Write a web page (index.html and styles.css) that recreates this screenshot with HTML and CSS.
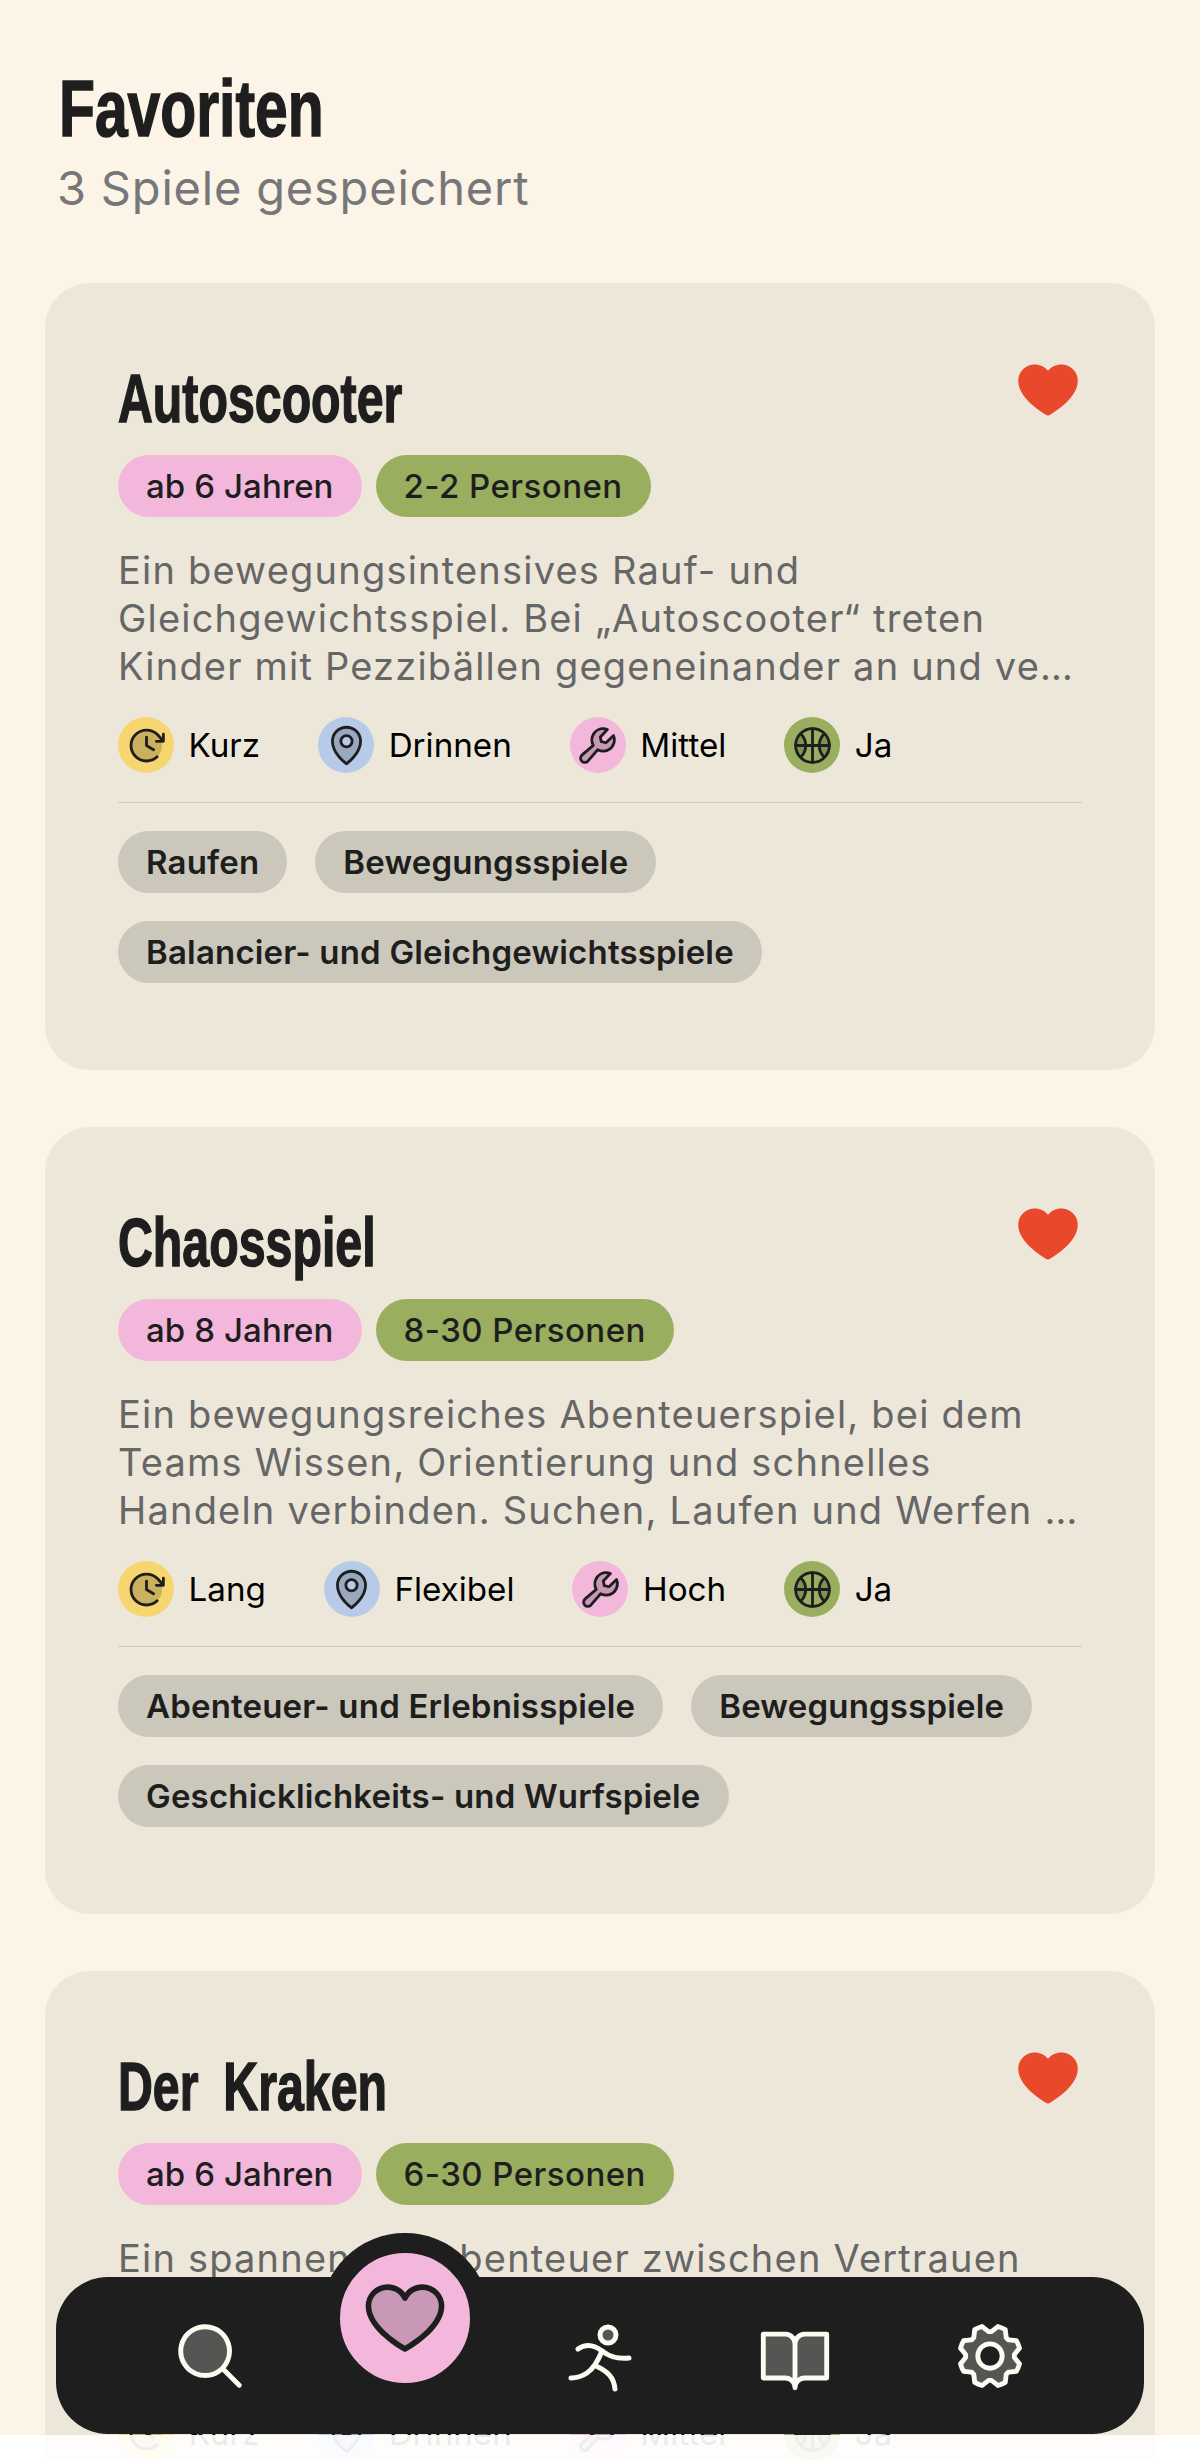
FILE: index.html
```html
<!DOCTYPE html>
<html lang="de">
<head>
<meta charset="utf-8">
<title>Favoriten</title>
<link rel="stylesheet" href="styles.css">
</head>
<body>
<svg class="sprite" xmlns="http://www.w3.org/2000/svg">
  <symbol id="i-heart-fill" viewBox="0 0 256 256"><path d="M240,94c0,70-103.79,126.66-108.21,129a8,8,0,0,1-7.58,0C119.79,220.66,16,164,16,94A62.07,62.07,0,0,1,78,32c20.65,0,38.73,8.88,50,23.89C139.27,40.88,157.35,32,178,32A62.07,62.07,0,0,1,240,94Z"/></symbol>
  <symbol id="i-clock" viewBox="0 0 256 256"><path opacity=".2" d="M216,128a88,88,0,1,1-88-88A88,88,0,0,1,216,128Z"/><path d="M136,80v43.47l36.12,21.67a8,8,0,0,1-8.24,13.72l-40-24A8,8,0,0,1,120,128V80a8,8,0,0,1,16,0Zm88-24a8,8,0,0,0-8,8V82c-6.35-7.36-12.83-14.45-20.12-21.83a96,96,0,1,0-2,137.7,8,8,0,0,0-11-11.64A80,80,0,1,1,184.54,71.4C192.68,79.64,199.81,87.58,207,96H184a8,8,0,0,0,0,16h40a8,8,0,0,0,8-8V64A8,8,0,0,0,224,56Z"/></symbol>
  <symbol id="i-pin" viewBox="0 0 256 256"><path opacity=".2" d="M128,24a80,80,0,0,0-80,80c0,72,80,128,80,128s80-56,80-128A80,80,0,0,0,128,24Zm0,112a32,32,0,1,1,32-32A32,32,0,0,1,128,136Z"/><path d="M128,64a40,40,0,1,0,40,40A40,40,0,0,0,128,64Zm0,64a24,24,0,1,1,24-24A24,24,0,0,1,128,128Zm0-112a88.1,88.1,0,0,0-88,88c0,31.4,14.51,64.68,42,96.25a254.19,254.19,0,0,0,41.45,38.3,8,8,0,0,0,9.18,0A254.19,254.19,0,0,0,174,200.25c27.45-31.57,42-64.85,42-96.25A88.1,88.1,0,0,0,128,16Zm0,206c-16.53-13-72-60.75-72-118a72,72,0,0,1,144,0C200,161.23,144.53,209,128,222Z"/></symbol>
  <symbol id="i-wrench" viewBox="0 0 256 256"><path opacity=".2" d="M224,96a64,64,0,0,1-94.94,56L73,217A24,24,0,0,1,39,183L104,126.94a64,64,0,0,1,80-90.29L144,80l5.66,26.34L176,112l43.35-40A63.8,63.8,0,0,1,224,96Z"/><path d="M226.76,69a8,8,0,0,0-12.84-2.88l-40.3,37.19-17.23-3.7-3.7-17.23,37.19-40.3A8,8,0,0,0,187,29.24,72,72,0,0,0,88,96,72.34,72.34,0,0,0,94,124.94L33.79,177c-.15.12-.29.26-.43.39a32,32,0,0,0,45.26,45.26c.13-.13.27-.28.39-.42L131.06,162A72,72,0,0,0,232,96,71.56,71.56,0,0,0,226.76,69ZM160,152a56.14,56.14,0,0,1-27.07-7,8,8,0,0,0-9.92,1.77L67.11,211.51a16,16,0,0,1-22.62-22.62L109.18,133a8,8,0,0,0,1.77-9.93,56,56,0,0,1,58.36-82.31l-31.2,33.81a8,8,0,0,0-1.94,7.1L141.83,108a8,8,0,0,0,6.14,6.14l26.35,5.66a8,8,0,0,0,7.1-1.94l33.81-31.2A56.06,56.06,0,0,1,160,152Z"/></symbol>
  <symbol id="i-ball" viewBox="0 0 256 256"><path opacity=".2" d="M62,62A93,93,0,0,1,62,194,93,93,0,0,1,62,62Zm132,0a93,93,0,0,1,0,132,93,93,0,0,1,0-132Z"/><g fill="none" stroke="currentColor" stroke-width="16" stroke-linecap="round"><circle cx="128" cy="128" r="96"/><path d="M128,32V224M32,128H224M62,62A93,93,0,0,1,62,194M194,62A93,93,0,0,0,194,194"/></g></symbol>
  <symbol id="i-search" viewBox="0 0 256 256"><path opacity=".25" d="M192,112a80,80,0,1,1-80-80A80,80,0,0,1,192,112Z"/><path d="M229.66,218.34l-50.07-50.06a88.11,88.11,0,1,0-11.31,11.31l50.06,50.07a8,8,0,0,0,11.32-11.32ZM40,112a72,72,0,1,1,72,72A72.08,72.08,0,0,1,40,112Z"/></symbol>
  <symbol id="i-heart-duo" viewBox="0 0 256 256"><path opacity=".2" d="M232,94c0,66-104,122-104,122S24,160,24,94A54,54,0,0,1,78,40c22.59,0,41.94,12.31,50,32,8.06-19.69,27.41-32,50-32A54,54,0,0,1,232,94Z"/><path d="M178,32c-20.65,0-38.73,8.88-50,23.89C116.73,40.88,98.65,32,78,32A62.07,62.07,0,0,0,16,94c0,70,103.79,126.66,108.21,129a8,8,0,0,0,7.58,0C136.21,220.66,240,164,240,94A62.07,62.07,0,0,0,178,32ZM128,206.8C109.74,196.16,32,147.69,32,94A46.06,46.06,0,0,1,78,48c19.45,0,35.78,10.36,42.6,27a8,8,0,0,0,14.8,0c6.82-16.67,23.15-27,42.6-27a46.06,46.06,0,0,1,46,46C224,147.61,146.24,196.15,128,206.8Z"/></symbol>
  <symbol id="i-run" viewBox="0 0 78 78"><circle cx="47" cy="18" r="8" fill="currentColor" fill-opacity=".25" stroke="currentColor" stroke-width="5"/><g fill="none" stroke="currentColor" stroke-width="5" stroke-linecap="round" stroke-linejoin="round"><path d="M17 32C24 27 32 27 41 34C50 41 58 42 68 41"/><path d="M41 34C37 44 32 52 26 56C20 60 16 61 10 61"/><path d="M35 49C46 54 53 60 54 72"/></g></symbol>
  <symbol id="i-book" viewBox="0 0 256 256"><path opacity=".25" d="M232,56V200H160a32,32,0,0,0-32,32,32,32,0,0,0-32-32H24V56H96a32,32,0,0,1,32,32,32,32,0,0,1,32-32Z"/><path d="M232,48H160a40,40,0,0,0-32,16A40,40,0,0,0,96,48H24a8,8,0,0,0-8,8V200a8,8,0,0,0,8,8H96a24,24,0,0,1,24,24,8,8,0,0,0,16,0,24,24,0,0,1,24-24h72a8,8,0,0,0,8-8V56A8,8,0,0,0,232,48ZM96,192H32V64H96a24,24,0,0,1,24,24V200A39.81,39.81,0,0,0,96,192Zm128,0H160a39.81,39.81,0,0,0-24,8V88a24,24,0,0,1,24-24h64Z"/></symbol>
  <symbol id="i-gear" viewBox="0 0 256 256"><path opacity=".25" fill-rule="evenodd" d="M199.9,123.66a73.93,73.93,0,0,1,0,8.68,8,8,0,0,0,1.74,5.48l14.19,17.73a91.57,91.57,0,0,1-6.23,15L187,173.11a8,8,0,0,0-5.1,2.64,74.11,74.11,0,0,1-6.14,6.14,8,8,0,0,0-2.64,5.1l-2.51,22.58a91.32,91.32,0,0,1-15,6.23l-17.74-14.19a8,8,0,0,0-5-1.75h-.48a73.93,73.93,0,0,1-8.68,0,8,8,0,0,0-5.48,1.74L100.45,215.8a91.57,91.57,0,0,1-15-6.23L82.89,187a8,8,0,0,0-2.64-5.1,74.11,74.11,0,0,1-6.14-6.14,8,8,0,0,0-5.1-2.64L46.43,170.6a91.32,91.32,0,0,1-6.23-15l14.19-17.74a8,8,0,0,0,1.74-5.48,73.93,73.93,0,0,1,0-8.68,8,8,0,0,0-1.74-5.48L40.2,100.45a91.57,91.57,0,0,1,6.23-15L69,82.89a8,8,0,0,0,5.1-2.64,74.11,74.11,0,0,1,6.14-6.14A8,8,0,0,0,82.89,69L85.4,46.43a91.32,91.32,0,0,1,15-6.23l17.74,14.19a8,8,0,0,0,5.48,1.74,73.93,73.93,0,0,1,8.68,0,8,8,0,0,0,5.48-1.74L155.55,40.2a91.57,91.57,0,0,1,15,6.23L173.11,69a8,8,0,0,0,2.64,5.1,74.11,74.11,0,0,1,6.14,6.14,8,8,0,0,0,5.1,2.64l22.58,2.51a91.32,91.32,0,0,1,6.23,15l-14.19,17.74A8,8,0,0,0,199.9,123.66ZM128,88a40,40,0,1,0,40,40A40,40,0,0,0,128,88Z"/><path d="M128,80a48,48,0,1,0,48,48A48.05,48.05,0,0,0,128,80Zm0,80a32,32,0,1,1,32-32A32,32,0,0,1,128,160Zm88-29.84q.06-2.16,0-4.32l14.92-18.64a8,8,0,0,0,1.48-7.06,107.21,107.21,0,0,0-10.88-26.25,8,8,0,0,0-6-3.93l-23.72-2.64q-1.48-1.56-3-3L186,40.54a8,8,0,0,0-3.94-6,107.71,107.71,0,0,0-26.25-10.87,8,8,0,0,0-7.06,1.49L130.16,40Q128,40,125.84,40L107.2,25.11a8,8,0,0,0-7.06-1.48A107.6,107.6,0,0,0,73.89,34.51a8,8,0,0,0-3.93,6L67.32,64.27q-1.56,1.49-3,3L40.54,70a8,8,0,0,0-6,3.94,107.71,107.71,0,0,0-10.87,26.25,8,8,0,0,0,1.49,7.06L40,125.84Q40,128,40,130.16L25.11,148.8a8,8,0,0,0-1.48,7.06,107.21,107.21,0,0,0,10.88,26.25,8,8,0,0,0,6,3.93l23.72,2.64q1.49,1.56,3,3L70,215.46a8,8,0,0,0,3.94,6,107.71,107.71,0,0,0,26.25,10.87,8,8,0,0,0,7.06-1.49L125.84,216q2.16.06,4.32,0l18.64,14.92a8,8,0,0,0,7.06,1.48,107.21,107.21,0,0,0,26.25-10.88,8,8,0,0,0,3.93-6l2.64-23.72q1.56-1.48,3-3L215.46,186a8,8,0,0,0,6-3.94,107.71,107.71,0,0,0,10.87-26.25,8,8,0,0,0-1.49-7.06Zm-16.1-6.5a73.93,73.93,0,0,1,0,8.68,8,8,0,0,0,1.74,5.48l14.19,17.73a91.57,91.57,0,0,1-6.23,15L187,173.11a8,8,0,0,0-5.1,2.64,74.11,74.11,0,0,1-6.14,6.14,8,8,0,0,0-2.64,5.1l-2.51,22.58a91.32,91.32,0,0,1-15,6.23l-17.74-14.19a8,8,0,0,0-5-1.75h-.48a73.93,73.93,0,0,1-8.68,0,8,8,0,0,0-5.48,1.74L100.45,215.8a91.57,91.57,0,0,1-15-6.23L82.89,187a8,8,0,0,0-2.64-5.1,74.11,74.11,0,0,1-6.14-6.14,8,8,0,0,0-5.1-2.64L46.43,170.6a91.32,91.32,0,0,1-6.23-15l14.19-17.74a8,8,0,0,0,1.74-5.48,73.93,73.93,0,0,1,0-8.68,8,8,0,0,0-1.74-5.48L40.2,100.45a91.57,91.57,0,0,1,6.23-15L69,82.89a8,8,0,0,0,5.1-2.64,74.11,74.11,0,0,1,6.14-6.14A8,8,0,0,0,82.89,69L85.4,46.43a91.32,91.32,0,0,1,15-6.23l17.74,14.19a8,8,0,0,0,5.48,1.74,73.93,73.93,0,0,1,8.68,0,8,8,0,0,0,5.48-1.74L155.55,40.2a91.57,91.57,0,0,1,15,6.23L173.11,69a8,8,0,0,0,2.64,5.1,74.11,74.11,0,0,1,6.14,6.14,8,8,0,0,0,5.1,2.64l22.58,2.51a91.32,91.32,0,0,1,6.23,15l-14.19,17.74A8,8,0,0,0,199.87,123.66Z"/></symbol>
</svg>

<div class="page">
  <header class="head">
    <h1 class="head-title">Favoriten</h1>
    <p class="head-sub">3 Spiele gespeichert</p>
  </header>

  <main class="list">
    <article class="card">
      <div class="card-top">
        <h2 class="card-title">Autoscooter</h2>
        <svg class="fav"><use href="#i-heart-fill"/></svg>
      </div>
      <div class="badges">
        <span class="badge badge-age">ab 6 Jahren</span>
        <span class="badge badge-people">2-2 Personen</span>
      </div>
      <p class="desc">Ein bewegungsintensives Rauf- und Gleichgewichtsspiel. Bei „Autoscooter“ treten Kinder mit Pezzibällen gegeneinander an und ve…</p>
      <ul class="facts">
        <li class="fact"><span class="dot dot-yellow"><svg class="dot-icon"><use href="#i-clock"/></svg></span><span class="fact-label">Kurz</span></li>
        <li class="fact"><span class="dot dot-blue"><svg class="dot-icon"><use href="#i-pin"/></svg></span><span class="fact-label">Drinnen</span></li>
        <li class="fact"><span class="dot dot-pink"><svg class="dot-icon"><use href="#i-wrench"/></svg></span><span class="fact-label">Mittel</span></li>
        <li class="fact"><span class="dot dot-green"><svg class="dot-icon"><use href="#i-ball"/></svg></span><span class="fact-label">Ja</span></li>
      </ul>
      <div class="tags">
        <span class="tag">Raufen</span>
        <span class="tag">Bewegungsspiele</span>
        <span class="tag">Balancier- und Gleichgewichtsspiele</span>
      </div>
    </article>

    <article class="card">
      <div class="card-top">
        <h2 class="card-title">Chaosspiel</h2>
        <svg class="fav"><use href="#i-heart-fill"/></svg>
      </div>
      <div class="badges">
        <span class="badge badge-age">ab 8 Jahren</span>
        <span class="badge badge-people">8-30 Personen</span>
      </div>
      <p class="desc">Ein bewegungsreiches Abenteuerspiel, bei dem Teams Wissen, Orientierung und schnelles Handeln verbinden. Suchen, Laufen und Werfen …</p>
      <ul class="facts">
        <li class="fact"><span class="dot dot-yellow"><svg class="dot-icon"><use href="#i-clock"/></svg></span><span class="fact-label">Lang</span></li>
        <li class="fact"><span class="dot dot-blue"><svg class="dot-icon"><use href="#i-pin"/></svg></span><span class="fact-label">Flexibel</span></li>
        <li class="fact"><span class="dot dot-pink"><svg class="dot-icon"><use href="#i-wrench"/></svg></span><span class="fact-label">Hoch</span></li>
        <li class="fact"><span class="dot dot-green"><svg class="dot-icon"><use href="#i-ball"/></svg></span><span class="fact-label">Ja</span></li>
      </ul>
      <div class="tags">
        <span class="tag">Abenteuer- und Erlebnisspiele</span>
        <span class="tag">Bewegungsspiele</span>
        <span class="tag">Geschicklichkeits- und Wurfspiele</span>
      </div>
    </article>

    <article class="card">
      <div class="card-top">
        <h2 class="card-title">Der Kraken</h2>
        <svg class="fav"><use href="#i-heart-fill"/></svg>
      </div>
      <div class="badges">
        <span class="badge badge-age">ab 6 Jahren</span>
        <span class="badge badge-people">6-30 Personen</span>
      </div>
      <p class="desc">Ein spannendes Abenteuer zwischen Vertrauen und Mut, bei dem ein Kind den Kraken spielt und die anderen versuchen, unbemerkt …</p>
      <ul class="facts">
        <li class="fact"><span class="dot dot-yellow"><svg class="dot-icon"><use href="#i-clock"/></svg></span><span class="fact-label">Kurz</span></li>
        <li class="fact"><span class="dot dot-blue"><svg class="dot-icon"><use href="#i-pin"/></svg></span><span class="fact-label">Drinnen</span></li>
        <li class="fact"><span class="dot dot-pink"><svg class="dot-icon"><use href="#i-wrench"/></svg></span><span class="fact-label">Mittel</span></li>
        <li class="fact"><span class="dot dot-green"><svg class="dot-icon"><use href="#i-ball"/></svg></span><span class="fact-label">Ja</span></li>
      </ul>
    </article>
  </main>

  <div class="veil"></div>

  <nav class="nav">
    <a class="nav-item"><svg class="nav-icon"><use href="#i-search"/></svg></a>
    <a class="nav-item"><span class="nav-active"><svg class="nav-active-icon"><use href="#i-heart-duo"/></svg></span></a>
    <a class="nav-item"><svg class="nav-icon"><use href="#i-run"/></svg></a>
    <a class="nav-item"><svg class="nav-icon"><use href="#i-book"/></svg></a>
    <a class="nav-item"><svg class="nav-icon"><use href="#i-gear"/></svg></a>
  </nav>
</div>
</body>
</html>
```

FILE: styles.css
```css
* { box-sizing: border-box; }

html, body { margin: 0; padding: 0; }

body {
  background: #fbf4e7;
  color: #1e1e1e;
  font-family: Inter, "Noto Sans", sans-serif;
}

.sprite { display: none; }

.page {
  position: relative;
  height: 2460px;
  overflow: hidden;
  background: #fbf4e7;
}

.head { padding: 69px 0 0 57px; height: 283px; }

.head-title,
.card-title {
  margin: 0;
  font-family: "Liberation Sans Narrow", "Liberation Sans", sans-serif;
  font-weight: 700;
  color: #1e1e1e;
  transform-origin: left center;
  -webkit-text-stroke: 1.5px #1e1e1e;
}

.head-title {
  font-size: 80px;
  line-height: 80px;
  margin-left: 2px;
  transform: scaleX(.735);
}

.head-sub {
  margin: 11px 0 0;
  font-size: 47px;
  line-height: 56px;
  letter-spacing: .8px;
  color: #77777a;
}

.list {
  display: flex;
  flex-direction: column;
  gap: 57px;
  padding: 0 45px;
}

.card {
  height: 787px;
  padding: 73px 73px 0;
  border-radius: 45px;
  background: #ede7da;
}

.card-top {
  display: flex;
  justify-content: space-between;
  align-items: flex-start;
  height: 99px;
}

.card-title {
  font-size: 68px;
  line-height: 78px;
  margin-top: 3px;
  word-spacing: 16px;
  transform: scaleX(.71);
}

.fav {
  width: 68px;
  height: 68px;
  fill: #e9482b;
}

.badges { display: flex; gap: 14px; }

.badge {
  height: 62px;
  padding: 0 28px;
  border-radius: 31px;
  font-size: 33px;
  font-weight: 500;
  line-height: 62px;
  letter-spacing: .1px;
  white-space: nowrap;
}

.badge-age { background: #f3b7dc; }
.badge-people { background: #9aae5f; letter-spacing: .45px; }

.desc {
  height: 144px;
  margin: 29px 0 0;
  font-size: 38px;
  line-height: 48px;
  letter-spacing: 1.2px;
  color: #666666;
}

.facts {
  display: flex;
  gap: 58px;
  margin: 27px 0 0;
  padding: 0 0 29px;
  border-bottom: 1px solid #cfc9bb;
  list-style: none;
}

.fact {
  display: flex;
  align-items: center;
  gap: 14.5px;
  font-size: 33.2px;
  color: #000;
}

.dot {
  display: flex;
  align-items: center;
  justify-content: center;
  width: 56px;
  height: 56px;
  border-radius: 50%;
}

.dot-yellow { background: #f7d66f; }
.dot-blue { background: #b7cbe8; }
.dot-pink { background: #f3b7dc; }
.dot-green { background: #9aae5f; }

.dot-icon {
  width: 45px;
  height: 45px;
  fill: #1e1e1e;
  color: #1e1e1e;
}

.tags {
  display: flex;
  flex-wrap: wrap;
  gap: 28px;
  margin-top: 28px;
}

.tag {
  height: 62px;
  padding: 0 28px;
  border-radius: 31px;
  background: #cbc7bb;
  font-size: 33px;
  font-weight: 600;
  line-height: 62px;
  letter-spacing: .18px;
  white-space: nowrap;
}

.veil {
  position: absolute;
  left: 0;
  right: 0;
  top: 2435px;
  bottom: 0;
  background: rgba(255, 255, 255, .92);
}

.nav {
  position: absolute;
  left: 56px;
  top: 2277px;
  display: flex;
  align-items: center;
  width: 1088px;
  height: 157px;
  padding: 0 56px;
  border-radius: 52px;
  background: #1e1e1e;
}

.nav-item {
  flex: 1;
  display: flex;
  align-items: center;
  justify-content: center;
}

.nav-icon {
  width: 78px;
  height: 78px;
  fill: #fdfaf2;
  color: #fdfaf2;
}

.nav-active {
  display: flex;
  flex: none;
  align-items: center;
  justify-content: center;
  width: 170px;
  height: 170px;
  border: 20px solid #1e1e1e;
  border-radius: 50%;
  background: #f3b7dc;
  transform: translateY(-38px);
}

.nav-active-icon {
  width: 90px;
  height: 90px;
  fill: #1e1e1e;
}
```
